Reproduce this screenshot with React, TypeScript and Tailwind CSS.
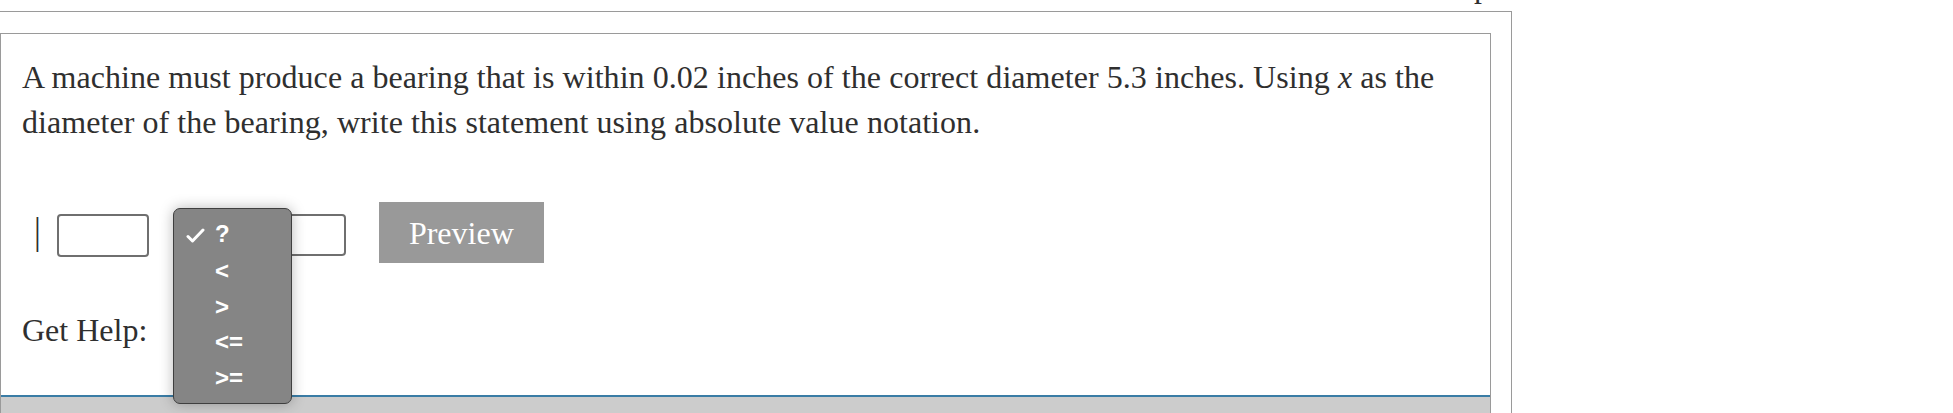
import React from "react";

export default function App() {
  return (
    <div className="relative w-[1953px] h-[413px] overflow-hidden bg-white text-[#2f2f2f] font-['Liberation_Serif','Times_New_Roman',serif]">
      {/* tail of the line above the frame */}
      <div className="h-[11px] w-[1512px] flex justify-end">
        <span className="text-[32px] leading-[30px] -mt-[29px] mr-[22px]">p</span>
      </div>
      {/* outer frame */}
      <div className="-ml-[20px] w-[1532px] h-[402px] border border-b-0 border-[#9a9a9a] pt-[21px] pl-[19px] pr-[20px]">
        {/* inner frame */}
        <div className="w-[1491px] h-[380px] border border-b-0 border-[#9a9a9a] flex flex-col">
          <div className="pl-[21px] pt-[21px] pr-[20px] text-[32px] leading-[45px] tracking-[0.05px]">
            <p>
              A machine must produce a bearing that is within 0.02 inches of the correct diameter 5.3 inches. Using{" "}
              <span className="italic">x</span> as the diameter of the bearing, write this statement using absolute value
              notation.
            </p>
          </div>
          <div className="relative flex items-start mt-[57px] pl-[33px]">
            <span className="inline-block mt-[10px] text-[34px] leading-[40px] scale-y-110">|</span>
            <input
              readOnly
              className="ml-[16px] mt-[12px] w-[92px] h-[43px] border-2 border-[#6f6f6f] rounded-[4px] bg-white outline-none"
            />
            <div className="ml-[105px] mt-[12px] w-[92px] h-[42px] border-2 border-[#6f6f6f] rounded-[4px] bg-white" />
            <button className="ml-[33px] w-[165px] h-[61px] bg-[#999] text-white text-[32px] leading-[32px] font-['Liberation_Serif',serif]">
              Preview
            </button>
            {/* open select menu */}
            <div className="absolute left-[172px] top-[6px] w-[119px] h-[196px] rounded-[7px] border border-[#3f3f3f] bg-[#858585] shadow-[0_0_14px_rgba(0,0,0,0.28)] pt-[7px] font-['Liberation_Sans',Arial,sans-serif] font-bold text-white text-[24px] leading-[35.5px]">
              <div className="relative h-[37px] pl-[41px]">
                <svg
                  className="absolute left-[12px] top-[12px]"
                  width="19"
                  height="15"
                  viewBox="0 0 19 15"
                  fill="none"
                  stroke="white"
                  strokeWidth="3"
                  strokeLinecap="round"
                  strokeLinejoin="round"
                >
                  <path d="M2 8.5 L6.5 13 L17 2" />
                </svg>
                ?
              </div>
              <div className="pl-[41px]">&lt;</div>
              <div className="pl-[41px]">&gt;</div>
              <div className="pl-[41px]">&lt;=</div>
              <div className="pl-[41px]">&gt;=</div>
            </div>
          </div>
          <div className="pl-[21px] mt-[45px] text-[32px] leading-[45px]">Get Help:</div>
          <div className="mt-auto h-[18px] border-t-2 border-[#3a7ca5] bg-[#cccccc]" />
        </div>
      </div>
    </div>
  );
}
